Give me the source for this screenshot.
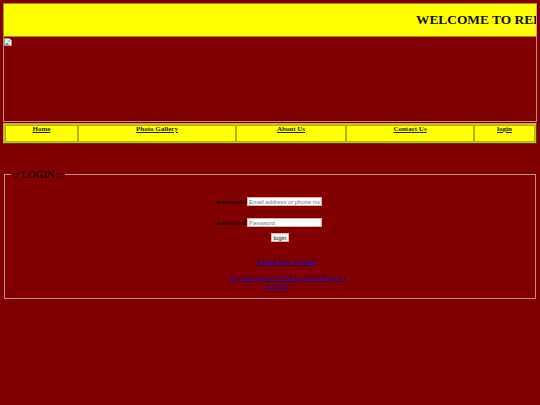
<style>
:global(body) { margin: 0; background: #800000; font-family: "Liberation Serif", "Times New Roman", serif; }
.page { width: 540px; height: 405px; box-sizing: border-box; padding: 3px 3px 0; overflow: hidden; }
.banner { height: 34px; box-sizing: border-box; background: #ffff00; border: 1px solid #b08a00; border-right-color: #c9a0a0; overflow: hidden; white-space: nowrap; padding: 7px 0 0 412px; font-size: 13.4px; font-weight: bold; line-height: 18px; color: #111; }
.hero { height: 85px; box-sizing: border-box; border: 1px solid #c08a8a; border-top: 0; padding: 1px 0 0 0; }
.broken { display: block; }
.nav { margin-top: 1px; height: 21px; box-sizing: border-box; padding: 1px; border: 1px solid; border-color: #b8b040 #50400a #50400a #b8b040; display: grid; grid-template-columns: 73px 158px 110px 128px 1fr; background: #c8c030; }
.nav a { background: #ffff00; border: 1px solid #b8b000; font-size: 7px; font-weight: bold; text-align: center; color: #222; text-decoration: underline; line-height: 6px; padding-top: 0; }
fieldset { margin: 24px 1px 0; padding: 0; height: 131px; box-sizing: border-box; border: 1px solid #c08a8a; display: flex; flex-direction: column; align-items: center; }
legend { margin-left: 6px; padding: 0 1px; font-size: 10px; font-weight: bold; color: #2a0000; line-height: 13px; }
.row { display: flex; align-items: center; font-size: 7px; font-weight: bold; color: #200000; }
.row label { width: 29px; text-align: right; margin-right: 2px; }
.row input { width: 75px; height: 9px; box-sizing: border-box; margin: 0; padding: 0 1px; border: 1px solid #e0b0b0; background: #fff; font: 5.9px "Liberation Sans", Arial, sans-serif; color: #555; }
.row input::placeholder { color: #777; }
.r1 { margin-top: 16px; margin-left: -2px; }
.r2 { margin-top: 12px; margin-left: -2px; }
.btn { margin: 6px 0 0 20px; height: 9px; width: 18px; box-sizing: border-box; padding: 0; border: 1px solid #e0b0b0; background: #f0f0f0; font: 6.2px "Liberation Sans", Arial, sans-serif; color: #222; }
.link { color: #20009a; font-size: 6.8px; text-decoration: underline; text-align: center; line-height: 7.5px; }
.new { margin-top: 16px; font-weight: bold; margin-left: 32px; }
.forgot { margin-top: 8px; width: 138px; margin-left: 14px; text-indent: 20px; }
</style>

<div class="page">
  <div class="banner">WELCOME TO REDHILL SCHOOL PORTAL</div>
  <div class="hero">
    <svg class="broken" width="8" height="8" viewBox="0 0 8 8" aria-hidden="true">
      <path d="M0.5 0.5H5.5L7.5 2.5V7.5H0.5Z" fill="#e8e8f0" stroke="#b0b0b0" stroke-width="0.6"/>
      <path d="M1 7L3 4.5L5 7Z" fill="#5a9a50"/>
      <circle cx="5" cy="3" r="1" fill="#9ab8e8"/>
    </svg>
  </div>
  <nav class="nav">
    <a href="#home">Home</a>
    <a href="#gallery">Photo Gallery</a>
    <a href="#about">About Us</a>
    <a href="#contact">Contact Us</a>
    <a href="#login">login</a>
  </nav>
  <fieldset>
    <legend>:: LOGIN ::</legend>
    <div class="row r1"><label for="u">username</label><input id="u" placeholder="Email address or phone number" /></div>
    <div class="row r2"><label for="p">password</label><input id="p" placeholder="Password" /></div>
    <button class="btn">login</button>
    <a class="link new" href="#new">Create New Account</a>
    <a class="link forgot" href="#forgot">forgotten password?/Help unlock/Report a problem</a>
  </fieldset>
</div>
